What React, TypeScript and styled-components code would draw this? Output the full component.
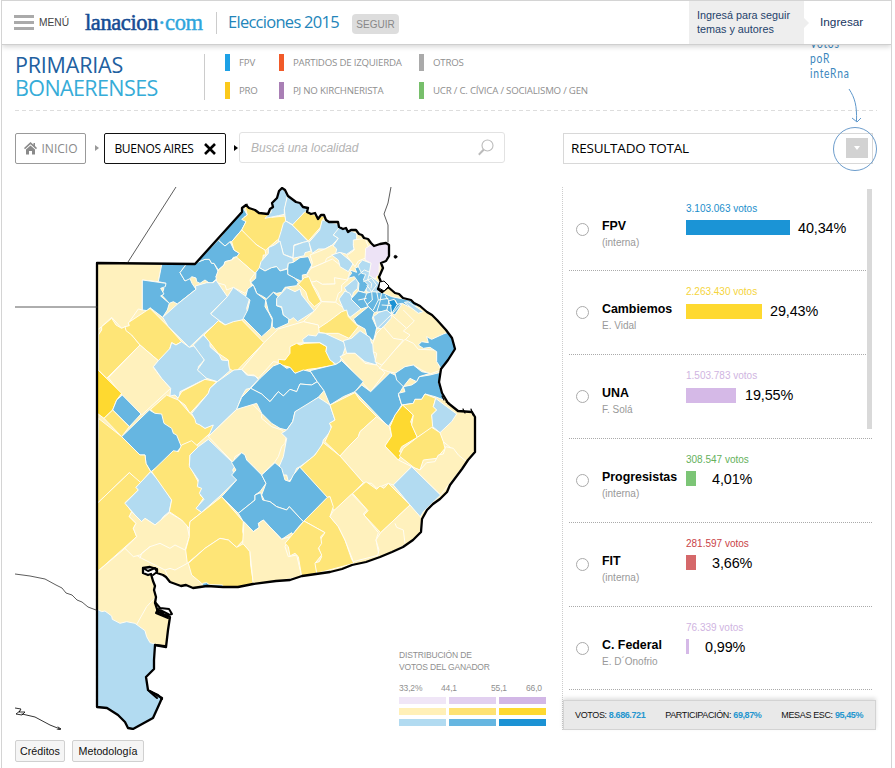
import React from 'react';
import styled, { createGlobalStyle } from 'styled-components';

const GlobalStyle = createGlobalStyle`
  * { box-sizing: border-box; }
  body { margin: 0; background: #fff; font-family: "Liberation Sans", Arial, sans-serif; overflow: hidden; }
  button { font-family: inherit; padding: 0; margin: 0; }
`;

const humanist = '"Open Sans", "Noto Sans", sans-serif';

const Page = styled.div`
  width: 891px;
  height: 768px;
  margin-left: 1px;
  border: 1px solid #d4d4d4;
  border-bottom: 0;
  overflow: hidden;
`;

/* ---------- top bar ---------- */

const TopBar = styled.header`
  position: relative;
  z-index: 2;
  display: flex;
  align-items: center;
  height: 44px;
  padding-left: 12px;
  background: #fff;
  border-bottom: 1px solid #cfcfcf;
  box-shadow: 0 2px 5px rgba(0, 0, 0, 0.16);
`;

const MenuButton = styled.button`
  display: flex;
  align-items: center;
  gap: 5px;
  width: 71px;
  border: 0;
  background: none;
  color: #444;
  font-size: 10.2px;
`;

const Bars = styled.span`
  display: grid;
  gap: 3px;
  width: 20px;
  i { height: 3px; background: #aaa; }
`;

const Logo = styled.div`
  width: 131px;
  height: 30px;
  font: 22.5px/29px "Liberation Serif", serif;
  letter-spacing: -0.4px;
  color: #164c94;
  -webkit-text-stroke: 0.55px currentColor;
  span { color: #2fa5dc; -webkit-text-stroke: 0.4px currentColor; }
`;

const Section = styled.div`
  height: 22px;
  padding-left: 11px;
  border-left: 1px solid #ccc;
  width: 136px;
  color: #2385ba;
  font: 16.5px/19px ${humanist};
  letter-spacing: -0.72px;
  white-space: nowrap;
`;

const FollowButton = styled.button`
  width: 47px;
  height: 20px;
  margin-top: 3px;
  border: 0;
  border-radius: 4px;
  background: #ddd;
  color: #888;
  font-size: 10px;
`;

const SignInHint = styled.div`
  position: relative;
  width: 115px;
  height: 43px;
  margin-left: auto;
  padding: 7px 0 0 8px;
  background: #eee;
  color: #24426b;
  font-size: 10.8px;
  line-height: 14px;
  &::after {
    content: "";
    position: absolute;
    left: 115px;
    top: 17px;
    border: 5px solid transparent;
    border-left-color: #eee;
    border-right: 0;
  }
`;

const SignIn = styled.a`
  width: 87px;
  padding: 0 0 2px 16px;
  color: #17365f;
  font-size: 11.8px;
`;

/* ---------- title and party key ---------- */

const Intro = styled.section`
  display: flex;
  height: 66px;
  margin: 0 14px 0 13px;
  padding-top: 9px;
  background: repeating-linear-gradient(90deg, #ddd 0 4px, transparent 4px 7px) bottom / 100% 1px no-repeat;
`;

const Title = styled.h1`
  width: 190px;
  height: 46px;
  margin: 0;
  border-right: 1px solid #ccc;
  color: #21609f;
  font: 21.5px/23px ${humanist};
  letter-spacing: -0.2px;
`;

const TitleLine = styled.span<{ $light?: boolean }>`
  display: block;
  height: 23px;
  line-height: 22px;
  ${(p) => p.$light && 'color: #36acd8; letter-spacing: -0.6px;'}
`;

const Key = styled.div`
  display: grid;
  grid-template-columns: 54px 140px 200px;
  grid-auto-rows: 17px;
  row-gap: 11px;
  margin-left: 20px;
`;

const KeyItem = styled.div<{ $color: string }>`
  padding-left: 9px;
  border-left: 5px solid ${(p) => p.$color};
  color: #8f8f8f;
  font: 9.7px/17px ${humanist};
  letter-spacing: -0.22px;
  white-space: nowrap;
`;

const Note = styled.div`
  position: relative;
  width: 70px;
  margin: -18px 0 0 auto;
  padding-left: 3px;
  color: #3a86bd;
  font: 13.5px/15px Lato, sans-serif;
  letter-spacing: 1px;
  span { display: block; transform: scaleX(0.76); transform-origin: left; }
`;

const NoteArrow = styled.svg`
  position: absolute;
  left: 24px;
  top: 51px;
  z-index: 3;
  overflow: visible;
`;

/* ---------- filters ---------- */

const Filters = styled.nav`
  display: flex;
  align-items: center;
  height: 31px;
  margin: 21px 14px 0 13px;
`;

const Crumb = styled.button<{ $active?: boolean }>`
  display: flex;
  flex: none;
  align-items: center;
  justify-content: center;
  gap: ${(p) => (p.$active ? 10 : 5)}px;
  width: ${(p) => (p.$active ? 122 : 71)}px;
  height: 31px;
  margin-top: 2px;
  border: 1px solid ${(p) => (p.$active ? '#111' : '#999')};
  border-radius: 2px;
  background: #fff;
  color: ${(p) => (p.$active ? '#000' : '#8a8a8a')};
  font: 12px/27px ${humanist};
  letter-spacing: ${(p) => (p.$active ? -0.3 : 0)}px;
  white-space: nowrap;
`;

const Chevron = styled.i<{ $color: string; $space: string }>`
  flex: none;
  margin: ${(p) => p.$space};
  border: 3px solid transparent;
  border-left: 4px solid ${(p) => p.$color};
  border-right: 0;
`;

const Search = styled.label`
  display: flex;
  flex: none;
  align-items: center;
  justify-content: space-between;
  width: 266px;
  height: 31px;
  padding: 0 10px 0 11px;
  border: 1px solid #e2e2e2;
  border-radius: 3px;
  color: #b4b4b4;
  font-size: 12px;
  font-style: italic;
`;

const Select = styled.div`
  position: relative;
  display: flex;
  flex: none;
  align-items: center;
  justify-content: space-between;
  width: 310px;
  height: 31px;
  margin: 1px 0 0 58px;
  padding: 0 4px 0 7px;
  border: 1px solid #d8d8d8;
  color: #000;
  font: 13.5px/26px ${humanist};
  letter-spacing: -0.2px;
`;

const SelectToggle = styled.span`
  display: grid;
  place-items: center;
  width: 22px;
  height: 20px;
  background: #d2d2d2;
  &::before {
    content: "";
    border: 3px solid transparent;
    border-top: 4px solid #fff;
    border-bottom: 0;
  }
`;

const Ring = styled.span`
  position: absolute;
  right: -5px;
  top: -7px;
  width: 44px;
  height: 44px;
  border: 1px solid #6d9dcc;
  border-radius: 50%;
`;

/* ---------- main area ---------- */

const Main = styled.main`
  display: flex;
  height: 543px;
  margin: 24px 14px 0 13px;
`;

const MapPane = styled.section`
  position: relative;
  width: 547px;
`;

const MapSvg = styled.svg`
  display: block;
`;

const Scale = styled.div`
  position: absolute;
  left: 384px;
  top: 462px;
  width: 148px;
  color: #8f8f8f;
  font-size: 8.5px;
  line-height: 12px;
  letter-spacing: -0.16px;
`;

const ScaleNumbers = styled.div`
  display: flex;
  margin: 9px 0 3px;
  font-size: 8.5px;
  span:nth-child(1) { width: 42px; }
  span:nth-child(2) { width: 50px; }
  span:nth-child(3) { width: 35px; }
`;

const ScaleGrid = styled.div`
  display: grid;
  grid-template-columns: repeat(3, 47px);
  grid-auto-rows: 7px;
  gap: 4px 3px;
`;

const Swatch = styled.i<{ $color: string }>`
  background: ${(p) => p.$color};
`;

const Results = styled.section`
  width: 314px;
  border-left: 1px dotted #ccc;
`;

const List = styled.div`
  position: relative;
  height: 513px;
  padding: 0.6px 0 0 6px;
  overflow: hidden;
  &::after {
    content: "";
    position: absolute;
    right: 4px;
    top: 2px;
    width: 5px;
    height: 240px;
    background: #d9d9d9;
  }
`;

const Row = styled.article`
  display: grid;
  grid-template-columns: 33px 84px 1fr;
  width: 303px;
  height: 83.8px;
  border-bottom: 1px dotted #aaa;
`;

const Radio = styled.i`
  width: 13px;
  height: 13px;
  margin: 35px 0 0 7px;
  border: 1px solid #aaa;
  border-radius: 50%;
`;

const Party = styled.div`
  padding-top: 31px;
  color: #000;
  font-size: 12.4px;
  font-weight: bold;
  line-height: 15px;
  white-space: nowrap;
  small {
    display: block;
    margin-top: 2px;
    color: #999;
    font-size: 10px;
    font-weight: normal;
    line-height: 14px;
  }
`;

const Tally = styled.div<{ $color: string }>`
  padding-top: 14px;
  color: ${(p) => p.$color};
  font-size: 10px;
  line-height: 14px;
`;

const Measure = styled.div<{ $gap: number }>`
  display: flex;
  align-items: center;
  gap: ${(p) => p.$gap}px;
  height: 16px;
  margin-top: 4px;
  color: #000;
  font-size: 14.4px;
  letter-spacing: -0.1px;
`;

const Bar = styled.i<{ $color: string; $width: number }>`
  width: ${(p) => p.$width}px;
  height: 15px;
  background: ${(p) => p.$color};
`;

const Totals = styled.footer`
  position: relative;
  display: flex;
  justify-content: space-between;
  align-items: center;
  height: 30px;
  padding: 0 12px 0 11px;
  border: 1px solid #d3d3d3;
  background: #e9e9e9;
  box-shadow: 0 -2px 4px rgba(0, 0, 0, 0.13);
  color: #111;
  font-size: 9px;
  letter-spacing: -0.36px;
  white-space: nowrap;
  b { color: #2496cf; letter-spacing: -0.4px; }
`;

const Links = styled.div`
  display: flex;
  gap: 7px;
  margin: 10px 0 0 13px;
`;

const LinkButton = styled.button<{ $width: number }>`
  width: ${(p) => p.$width}px;
  height: 22px;
  border: 1px solid #d0d0d0;
  border-radius: 2px;
  background: #f5f5f5;
  color: #111;
  font-size: 10.7px;
`;

/* ---------- map data ---------- */

const tones: Record<string, string> = {
  y0: '#fff1bd', y1: '#fee577', y2: '#fed930',
  b0: '#b2dbf1', b1: '#66b6e1', b2: '#1c92d4',
  v0: '#ede3f6',
};

type Sheet = { x: number; y: number; areas: [string, string][]; lines?: string[] };

/* Each sheet holds its districts in third-of-a-pixel units from its own corner. */
const sheets: Sheet[] = [
  {
    x: 90, y: 180,
    areas: [
      ['y0', '20,245 216,252 205,305 157,300 157,390 145,387 115,430 118,440 95,445 65,412 35,440 22,450'],
      ['b1', '216,250 288,254 270,278 285,303 298,291 306,310 318,328 262,372 250,365 238,370 215,345 222,325 210,322 228,310 205,305'],
      ['b1', '288,254 315,248 345,238 358,238 365,250 372,250 385,275 378,290 382,295 362,312 345,300 330,310 320,305 318,294 305,290 300,296 285,303 270,278'],
      ['b1', '157,300 228,310 226,320 212,325 222,342 212,348 238,370 232,390 218,412 180,383 172,392 157,390'],
      ['b1', '315,250 385,180 405,198 420,185 432,210 448,220 450,230 430,232 425,240 405,245 402,255 385,270 372,250 365,250 358,238 345,238'],
      ['b1', '385,180 460,85 472,105 462,112 468,125 455,150 425,185 420,185 405,198'],
      ['y1', '464,75 500,85 538,100 545,112 585,108 590,130 575,160 580,178 562,180 530,208 525,212 480,180 455,150 468,125 455,118 472,105'],
      ['y1', '425,185 455,150 500,195 525,210 528,225 520,225 515,262 495,280 460,250 450,240 435,237 448,220 432,210'],
      ['y0', '385,270 402,255 405,245 425,240 438,230 495,280 480,300 485,320 465,340 430,322 410,330 405,315 380,308 378,290'],
      ['b0', '218,412 265,370 318,328 316,318 350,308 370,308 378,300 412,350 362,400 388,422 340,462 298,502 235,440'],
      ['b0', '362,402 412,350 430,322 462,345 480,352 470,385 475,405 435,435 430,428 410,437 388,422'],
    ],
  },
  {
    x: 225, y: 185,
    areas: [
      ['b0', '120,100 138,82 140,50 168,5 188,30 182,60 178,72 178,88 160,92'],
      ['b0', '178,72 188,30 250,62 248,82 235,85 232,98 205,120 182,108 180,92'],
      ['b0', '175,115 182,108 202,120 250,170 235,172 207,180 204,218 175,208 170,188 160,165 168,140'],
      ['b0', '103,248 108,230 130,205 130,188 148,180 165,168 175,208 204,220 205,232 190,235 188,250 165,258 155,245 140,248 120,258'],
      ['b0', '207,182 235,172 252,168 258,198 240,203 238,212 204,220'],
      ['y1', '202,120 240,80 268,90 300,95 290,110 288,125 250,168'],
      ['b0', '252,172 284,135 292,105 340,118 345,145 325,150 340,160 322,180 300,192 280,192 262,205'],
      ['b0', '325,150 345,125 395,145 395,170 385,178 388,192 365,208 345,202 330,208 325,182 340,160'],
      ['y0', '255,210 300,192 322,180 335,192 332,206 305,220 300,232 258,250 262,232'],
      ['y0', '245,270 258,250 300,232 322,222 345,240 374,262 368,285 330,297 292,298 275,288 258,292'],
      ['y0', '258,292 275,288 292,298 330,297 328,278 368,285 350,300 350,318 340,325 332,352 290,350 278,320'],
      ['y0', '235,410 268,378 290,350 332,352 365,375 282,432 278,420'],
      ['b0', '320,210 345,202 385,235 370,260 345,245 340,225'],
      ['y0', '385,182 385,165 420,160 430,185 432,215 400,228 390,245 365,212 388,195'],
      ['v0', '422,190 440,178 492,170 497,215 463,235 462,268 450,282 430,270 438,235 420,225'],
      ['b1', '188,252 190,235 205,232 225,218 250,215 260,240 245,268 232,270 232,290 210,280 188,268'],
      ['b1', '78,292 92,280 93,262 103,248 120,258 140,248 155,245 165,258 188,252 188,268 210,280 220,292 215,302 180,307 170,322 155,325 145,322 125,342 115,335 95,325 90,310'],
      ['b1', '68,312 85,300 95,325 122,345 120,365 132,385 142,405 138,430 110,455 55,400 68,375 75,345 62,335'],
      ['b1', '122,345 145,322 160,335 155,350 155,362 170,368 175,390 192,400 190,415 152,432 142,425 142,400 130,378'],
      ['b0', '155,340 185,308 210,320 225,312 230,330 268,378 218,410 205,398 195,405 175,390 170,365 155,362'],
      ['y1', '220,298 238,278 252,275 262,300 288,350 268,365 250,345 242,320'],
      ['b0', '358,308 392,280 400,290 398,310 385,322 380,345'],
      ['b0', '342,342 360,318 375,325 385,345 408,372 375,397 355,372'],
      ['b0', '400,240 412,225 438,235 432,270 452,285 465,295 460,330 425,320 415,290 400,270'],
      ['b1', '368,280 380,265 375,255 395,262 390,250 400,245 410,265 422,268 415,285 430,300 418,322 400,318 402,295 388,275'],
      ['b1', '378,342 400,318 425,325 440,320 470,322 500,335 550,345 575,355 570,375 532,355 510,390 485,378 448,382 430,365 408,372'],
      ['b1', '385,402 430,365 448,382 442,400 455,428 450,450 445,468 425,450 420,432 395,418'],
      ['b0', '445,395 462,382 485,375 500,388 498,400 485,415 470,432 455,428'],
      ['b0', '538,352 550,350 595,380 580,385'],
      ['b2', '490,348 508,343 517,358 500,386 497,362'],
      ['y2', '455,273 464,271 463,284 456,282'],
      ['y1', '270,440 280,430 310,410 350,380 365,375 370,395 400,425 372,460 340,445 300,445'],
    ],
    lines: [
      '400,270 418,255 435,262', '415,290 440,280 455,300', '425,300 440,320 455,300', '432,270 428,285 440,295 438,310',
      '425,325 418,345 430,365', '440,320 442,345 425,360', '455,320 460,345 445,375', '470,322 465,350 455,382',
      '460,345 490,340', '480,330 492,348 485,378', '400,345 425,340', '510,345 517,358 530,355', '470,360 500,362',
      '530,355 500,388 455,432', '500,390 545,430 535,438 555,450 535,470', '545,430 568,408 535,375',
    ],
  },
  {
    x: 90, y: 310,
    areas: [
      ['y1', '25,75 35,60 35,50 65,25 78,45 95,55 105,50 150,105 50,205 25,180'],
      ['y1', '105,50 118,47 115,38 180,-5 235,50 275,95 258,105 245,98 238,120 205,152 150,105 125,75 108,62'],
      ['y0', '55,203 150,105 205,152 190,172 215,205 242,235 155,315 95,255'],
      ['y2', '22,178 95,250 80,270 68,300 42,325 22,310'],
      ['b1', '97,255 153,312 118,350 68,300 80,270'],
      ['y1', '68,300 118,350 95,380 42,325'],
      ['b0', '190,170 205,152 240,115 245,98 258,105 275,95 298,112 310,108 335,125 343,150 325,170 325,182 345,195 350,208 330,215 310,225 270,245 268,268 255,255 240,258 242,235 215,205'],
      ['b0', '310,105 340,75 360,95 360,110 388,135 395,150 415,152 420,182 382,215 350,205 322,180 343,150'],
      ['y1', '342,75 385,32 405,45 430,35 455,30 522,98 435,188 418,175 415,150 385,130'],
      ['y1', '262,268 275,245 345,208 380,215 360,235 355,250 300,310 285,285'],
      ['y1', '182,298 230,255 245,262 265,270 300,310 318,328 330,345 345,355 365,345 380,352 315,410 305,395 290,405 285,415 260,430 275,412 250,370 222,340'],
      ['b0', '305,310 355,250 360,235 382,215 432,180 455,178 470,195 495,198 505,208 480,235 468,238 455,260 440,298 355,380 370,345 345,355 330,345 318,340 315,328'],
      ['y0', '455,178 522,98 565,57 640,35 685,45 690,85 650,98 620,100 605,150 570,158 550,155 505,205 492,195 475,195'],
      ['b1', '95,380 178,300 195,310 215,312 222,340 245,355 250,370 260,375 270,400 275,412 265,420 260,430 183,485 168,462 165,435 150,435'],
      ['y0', '355,380 440,298 485,280 515,310 515,325 545,350 575,360 590,375 585,400 575,410 565,440 555,455 515,495 490,468 470,450 455,428 435,440 430,458'],
    ],
  },
  {
    x: 280, y: 310,
    areas: [
      ['y2', '-5,148 15,150 30,130 30,110 50,100 60,105 75,100 118,98 140,110 138,125 165,165 110,175 85,178 45,190 30,172 -5,162'],
      ['b0', '68,88 85,75 108,78 115,68 135,70 200,100 190,130 180,155 168,163 150,150 138,125 140,110 120,98 70,98'],
      ['b0', '190,92 215,85 240,62 270,82 275,100 290,105 280,125 290,165 255,155 225,130 200,130'],
      ['y0', '180,140 200,130 225,130 255,160 290,165 315,188 272,245 235,205'],
      ['y0', '278,100 290,70 310,50 340,85 370,90 345,120 320,150 305,165 285,155 290,130 280,125'],
      ['y0', '298,175 345,120 375,88 400,100 415,118 470,120 470,150 483,180 450,192 425,180 400,165 350,190 325,185'],
      ['b1', '415,105 425,95 445,98 440,80 455,88 490,72 510,65 530,118 483,175 470,155 470,125 450,112 430,115'],
      ['b1', '-88,235 -60,205 -20,168 0,160 20,175 30,172 45,190 70,180 92,185 112,215 95,225 60,222 50,245 30,238 10,258 -5,245 -30,275 -55,252'],
      ['b1', '-88,235 -55,252 -30,275 -5,245 10,258 30,238 50,245 60,222 95,225 112,215 132,242 115,262 60,300 45,305 38,335 20,360 0,355 -25,340 -55,310 -70,280 -130,298 -115,262'],
      ['b1', '90,182 168,163 185,152 250,215 225,245 190,260 150,285 132,242 112,215'],
      ['b1', '225,245 245,225 272,245 330,188 345,195 370,230 355,255 365,285 325,350'],
      ['b1', '345,190 375,170 400,165 425,185 450,190 418,200 410,215 390,205 370,230 350,210'],
      ['b1', '370,230 395,225 410,215 418,200 450,195 490,185 475,215 492,270 465,260 435,252 425,268 405,268 400,280 365,285 355,250 375,245'],
      ['b0', '20,360 38,335 45,305 115,262 150,285 165,330 150,340 155,360 130,390 125,410 100,440 60,470 50,475 40,500 25,515 20,495 5,495 -5,475 10,440 20,385 5,370'],
      ['y1', '150,285 225,248 240,270 290,320 240,365 235,380 180,438 135,395 155,350 148,340 165,330'],
      ['y0', '180,438 210,405 235,380 240,365 290,320 328,350 335,378 315,408 355,450 395,470 340,525 325,520 290,535 275,520 250,518'],
      ['y2', '330,350 345,315 368,285 400,315 392,335 412,382 365,410 358,425 370,430 355,450 315,408 335,378'],
      ['y1', '368,285 400,280 405,268 425,268 435,252 467,265 460,290 470,300 455,315 462,350 440,365 412,382 395,345 400,315'],
      ['b0', '467,265 500,290 530,312 515,335 480,368 458,350 455,315 470,300 460,290'],
      ['y1', '412,382 455,352 480,368 490,395 495,415 470,445 430,450 420,480 405,475 358,438 370,415'],
    ],
    lines: ['490,395 520,420 525,440 545,450'],
  },
  {
    x: 90, y: 440,
    areas: [
      ['y1', '25,-65 95,-10 150,45 165,45 168,70 182,95 150,130 118,98 22,190'],
      ['y1', '22,190 118,98 155,130 138,142 145,150 105,188 125,215 118,230 138,250 130,265 140,290 22,395'],
      ['y0', '22,395 105,325 155,355 225,390 240,425 170,500 80,660 20,620'],
      ['b0', '105,190 145,150 138,142 182,95 205,120 245,180 238,215 220,230 210,245 195,255 165,235 155,245 135,225'],
      ['y0', '118,230 125,215 155,245 165,235 195,255 238,218 275,240 290,250 298,290 285,330 255,315 240,325 210,310 180,320 150,345 130,350 105,325 140,290 130,265 138,250'],
      ['y1', '185,95 250,32 265,35 275,15 305,2 325,20 300,45 298,75 340,155 330,165 340,175 320,205 335,217 300,245 298,265 275,240 238,215 245,180'],
      ['b0', '300,45 325,20 355,-2 425,65 440,70 428,90 440,120 390,168 335,217 318,205 342,178 328,160 335,145 322,140 325,120 298,80'],
      ['b1', '395,170 440,120 425,105 438,90 425,68 455,38 465,45 470,60 515,105 528,130 510,155 495,165 495,180 445,220'],
      ['b1', '515,105 555,68 575,85 585,120 600,125 610,105 630,80 715,172 640,245 598,200 590,210 575,205 560,200 540,185 525,185 515,165 528,130'],
      ['b1', '445,220 495,180 495,165 512,158 518,180 540,185 560,200 590,210 598,200 640,245 618,270 610,285 605,278 575,298 520,240 505,250 508,262 490,275 460,245'],
      ['y1', '298,262 300,245 395,170 460,245 458,275 465,295 440,322 415,300 390,295 345,325 292,370 287,330 298,290'],
      ['y1', '295,370 345,325 390,295 415,300 440,322 462,310 480,335 482,375 492,440 330,450 335,430 305,405'],
      ['b1', '338,430 350,428 358,434 398,435 398,448 338,448'],
      ['y0', '462,245 490,275 508,262 505,250 520,240 575,298 600,290 585,320 595,350 620,345 635,410 490,435 480,335 458,310'],
    ],
    lines: ['150,355 155,340 180,320', '225,390 240,385 255,390 292,370'],
  },
  {
    x: 280, y: 440,
    areas: [
      ['y1', '60,82 105,45 130,8 180,48 250,128 165,212 158,205 150,170 142,172'],
      ['y1', '72,243 142,172 150,170 160,200 150,230 175,260 195,300 215,358 222,370 110,400 100,370 118,365 125,350 115,320 120,300 135,278'],
      ['y1', '15,310 72,243 135,278 122,290 125,310 115,325 125,345 105,370 110,400 65,410 55,350 45,340 30,348 25,320'],
      ['y0', '150,230 158,215 215,162 262,210 250,222 295,278 288,300 297,345 220,365 195,300 175,260'],
      ['y1', '218,160 258,125 290,148 300,138 312,145 325,130 365,170 390,195 302,278 252,225 264,212'],
      ['b0', '340,135 395,80 482,165 430,215 418,235 390,195'],
      ['y0', '395,80 420,90 440,68 465,65 475,45 490,42 497,20 520,25 535,45 560,65 482,165'],
      ['y0', '302,278 390,195 425,235 420,290 290,360 297,330 288,300'],
    ],
    lines: ['345,250 350,262 370,270 375,310'],
  },
  {
    x: 0, y: 560,
    areas: [['b0', '292,148 305,155 315,153 335,168 337,178 360,190 380,185 405,190 435,212 440,230 450,248 465,252 530,350 490,530 360,530 290,450']],
  },
];

const border =
  'M97 263 195 264 242 212 242 208 246 205 249 208 255 210 259 213 268 214 270 209 273 207 272 203 277 198 279 191 282 188 285 190 288 196 292 199 296 202 300 203 303 207 308 208 307 212 311 214 315 213 318 219 321 215 324 215 326 220 329 222 338 222 339 227 343 229 346 228 348 232 351 230 356 230 359 234 362 235 364 238 368 239 371 243 374 246 380 244 386 243 389 245 389 256 386 261 381 263 383 268 379 277 381 282 378 289 382 292 388 287 395 293 399 294 403 298 411 300 414 303 420 306 427 312 432 315 437 320 446 330 452 338 455 349 448 360 441 369 439 382 442 393 448 403 458 411 472 412 475 417 475 452 468 460 462 469 456 477 450 485 447 492 440 499 433 504 427 510 422 519 421 532 413 540 403 547 392 552 380 557 366 562 352 565 342 569 330 572 316 574 302 576 290 580 276 581 253 584 238 587 223 587 207 586 193 588 186 585 181 586 170 582 166 577 163 575 157 573 157 569 150 567 143 568 143 573 148 575 151 574 153 581 155 586 154 590 156 597 155 603 158 612 170 617 168 630 166 647 155 645 154 660 154 669 146 677 148 690 162 698 158 707 153 718 133 729 128 728 125 722 118 715 107 708 97 707Z';

function DistrictMap() {
  return (
    <MapSvg width="547" height="543" viewBox="15 187 547 543" aria-label="Mapa de la provincia de Buenos Aires">
      <clipPath id="province"><path d={border} /></clipPath>
      <g clipPath="url(#province)">
        <rect x="90" y="180" width="400" height="560" fill={tones.y0} />
        {sheets.map((s) => (
          <g key={`${s.x}-${s.y}`} transform={`translate(${s.x} ${s.y}) scale(0.33333)`} stroke="#fffdf4" strokeWidth="2.9" strokeLinejoin="round">
            {s.areas.map(([tone, pts], i) => <polygon key={i} points={pts} fill={tones[tone]} />)}
            {s.lines?.map((pts, i) => <polyline key={i} points={pts} fill="none" />)}
          </g>
        ))}
      </g>
      <g fill="none" stroke="#000" strokeLinejoin="round" strokeLinecap="round">
        <path d={border} strokeWidth="2.3" />
        <path d="M380 282 384 281 389 286 384 291 379 288Z" fill="#fff" strokeWidth="1" />
        <path d="M143 568 148 571 155 568 157 572 153 575M155 602 160 608 169 609 172 614 165 616 158 609 156 613 168 618M160 610 168 614M155 645 165 646M149 691 158 695 162 699M150 692 157 698" strokeWidth="2" />
        <path d="M442 396 444 400M446 402 449 403M463 409 465 413M471 409 473 415M247 206V204" strokeWidth="1.2" />
        <circle cx="395.5" cy="256.8" r="1.4" fill="#000" strokeWidth="1" />
        <g stroke="#333" strokeWidth="0.8">
          <path d="M128 262 176 187M15 307H97M388 242 388 225 384 214 388 203 391 187" />
          <path d="M15 574 30 576 45 579 56 585 62 588 66 593 72 595 77 600 82 602 88 607 96 610" />
          <path d="M15 708 21 709 19 712 25 712 22 715 16 714 20 711M22 714 35 717 50 725 60 729M58 727 61 729 57 730" stroke="#000" />
        </g>
      </g>
    </MapSvg>
  );
}

/* ---------- content ---------- */

const parties = [
  ['#1da1e6', 'FPV'], ['#f15a29', 'PARTIDOS DE IZQUIERDA'], ['#aaa', 'OTROS'],
  ['#fbc91b', 'PRO'], ['#a97fb5', 'PJ NO KIRCHNERISTA'], ['#77bf6b', 'UCR / C. CÍVICA / SOCIALISMO / GEN'],
];

const results = [
  { name: 'FPV', sub: '(interna)', votes: '3.103.063', pct: '40,34%', color: '#1b94d6', text: '#1b8ecb', width: 104, gap: 8 },
  { name: 'Cambiemos', sub: 'E. Vidal', votes: '2.263.430', pct: '29,43%', color: '#fed930', text: '#f5d43c', width: 76, gap: 8 },
  { name: 'UNA', sub: 'F. Solá', votes: '1.503.783', pct: '19,55%', color: '#d5b9e7', text: '#cfb4e1', width: 50, gap: 9 },
  { name: 'Progresistas', sub: '(interna)', votes: '308.547', pct: '4,01%', color: '#7cc576', text: '#65b15c', width: 10, gap: 16 },
  { name: 'FIT', sub: '(interna)', votes: '281.597', pct: '3,66%', color: '#d5686a', text: '#c94347', width: 10, gap: 16 },
  { name: 'C. Federal', sub: 'E. D´Onofrio', votes: '76.339', pct: '0,99%', color: '#d5b9e7', text: '#cfb4e1', width: 3, gap: 16 },
];

const swatches = ['#f0e6f7', '#e2d0f0', '#d2b7e6', '#fff0b8', '#fee273', '#fed930', '#b2dbf1', '#66b6e1', '#1c92d4'];

export default function App() {
  return (
    <Page>
      <GlobalStyle />
      <TopBar>
        <MenuButton><Bars><i /><i /><i /></Bars>MENÚ</MenuButton>
        <Logo>lanacion<span>·com</span></Logo>
        <Section>Elecciones 2015</Section>
        <FollowButton>SEGUIR</FollowButton>
        <SignInHint>Ingresá para seguir<br />temas y autores</SignInHint>
        <SignIn>Ingresar</SignIn>
      </TopBar>

      <Intro>
        <Title><TitleLine>PRIMARIAS</TitleLine><TitleLine $light>BONAERENSES</TitleLine></Title>
        <Key>
          {parties.map(([color, label]) => <KeyItem key={label} $color={color}>{label}</KeyItem>)}
        </Key>
        <Note>
          <span>Votos</span><span>poR</span><span>inteRna</span>
          <NoteArrow width="40" height="40" viewBox="831 87 40 40" fill="none" stroke="#5f98cc" strokeWidth="1">
            <path d="M849 89C855 98 857 106 856.5 121M852 118 857 122 861 118" />
          </NoteArrow>
        </Note>
      </Intro>

      <Filters>
        <Crumb>
          <svg width="13" height="13" viewBox="0 0 13 13" fill="#8a8a8a">
            <path d="M6.5 0 0 6 1 7.2 6.5 2.3 12 7.2 13 6 11 4V1H9.5V2.7Z" />
            <path d="M6.5 3.5 2 7.5V12.5H5V9H8V12.5H11V7.5Z" />
          </svg>
          INICIO
        </Crumb>
        <Chevron $color="#999" $space="0 5px 0 9px" />
        <Crumb $active>
          BUENOS AIRES
          <svg width="12" height="12" viewBox="0 0 12 12" stroke="#000" strokeWidth="2.6"><path d="M1 1 11 11M11 1 1 11" /></svg>
        </Crumb>
        <Chevron $color="#000" $space="0 1px 0 8px" />
        <Search>
          Buscá una localidad
          <svg width="16" height="17" viewBox="0 0 16 17" fill="none" stroke="#bbb" strokeWidth="1.1">
            <circle cx="9.5" cy="6.5" r="5.5" /><path d="M6 11 1 16M5.2 10.5 0.5 15.3" />
          </svg>
        </Search>
        <Select>RESULTADO TOTAL<SelectToggle /><Ring /></Select>
      </Filters>

      <Main>
        <MapPane>
          <DistrictMap />
          <Scale>
            DISTRIBUCIÓN DE<br />VOTOS DEL GANADOR
            <ScaleNumbers><span>33,2%</span><span>44,1</span><span>55,1</span><span>66,0</span></ScaleNumbers>
            <ScaleGrid>{swatches.map((c) => <Swatch key={c} $color={c} />)}</ScaleGrid>
          </Scale>
        </MapPane>
        <Results>
          <List>
            {results.map((r) => (
              <Row key={r.name}>
                <Radio />
                <Party>{r.name}<small>{r.sub}</small></Party>
                <Tally $color={r.text}>
                  {r.votes} votos
                  <Measure $gap={r.gap}><Bar $color={r.color} $width={r.width} />{r.pct}</Measure>
                </Tally>
              </Row>
            ))}
          </List>
          <Totals>
            <span>VOTOS: <b>8.686.721</b></span>
            <span>PARTICIPACIÓN: <b>69,87%</b></span>
            <span>MESAS ESC: <b>95,45%</b></span>
          </Totals>
        </Results>
      </Main>

      <Links>
        <LinkButton $width={50}>Créditos</LinkButton>
        <LinkButton $width={72}>Metodología</LinkButton>
      </Links>
    </Page>
  );
}
